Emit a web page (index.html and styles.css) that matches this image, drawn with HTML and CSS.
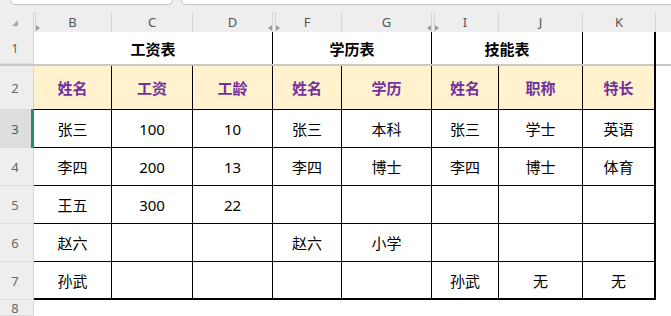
FILE: index.html
```html
<!DOCTYPE html>
<html lang="zh">
<head>
<meta charset="utf-8">
<title>Sheet</title>
<link rel="stylesheet" href="styles.css">
</head>
<body>
<div class="topbar"><div class="tab tab1"></div><div class="tab tab2"></div></div>
<div class="grid colhdr">
  <div class="ch corner"><span class="corner-tri"></span></div>
  <div class="ch hid hid1">B<span class="arr arr-r a1"></span></div>
  <div class="ch">C</div>
  <div class="ch">D<span class="arr arr-l"></span></div>
  <div class="ch hid hid2">F<span class="arr arr-r a2"></span></div>
  <div class="ch">G<span class="arr arr-l"></span></div>
  <div class="ch hid hid2">I<span class="arr arr-r a2"></span></div>
  <div class="ch">J</div>
  <div class="ch">K</div>
  <div class="ch noline"></div>
</div>
<div class="grid sheet">
  <div class="rh">1</div>
  <div class="c t span3">工资表</div>
  <div class="c t span2">学历表</div>
  <div class="c t span2">技能表</div>
  <div class="c t k"></div>
  <div class="e"></div>

  <div class="frozen"></div>
  <div class="frozen-l"></div>

  <div class="rh">2</div>
  <div class="c h">姓名</div>
  <div class="c h">工资</div>
  <div class="c h">工龄</div>
  <div class="c h">姓名</div>
  <div class="c h">学历</div>
  <div class="c h">姓名</div>
  <div class="c h">职称</div>
  <div class="c h k">特长</div>
  <div class="e"></div>

  <div class="rh sel">3</div>
  <div class="c">张三</div>
  <div class="c">100</div>
  <div class="c">10</div>
  <div class="c">张三</div>
  <div class="c">本科</div>
  <div class="c">张三</div>
  <div class="c">学士</div>
  <div class="c k">英语</div>
  <div class="e"></div>

  <div class="rh">4</div>
  <div class="c">李四</div>
  <div class="c">200</div>
  <div class="c">13</div>
  <div class="c">李四</div>
  <div class="c">博士</div>
  <div class="c">李四</div>
  <div class="c">博士</div>
  <div class="c k">体育</div>
  <div class="e"></div>

  <div class="rh">5</div>
  <div class="c">王五</div>
  <div class="c">300</div>
  <div class="c">22</div>
  <div class="c"></div>
  <div class="c"></div>
  <div class="c"></div>
  <div class="c"></div>
  <div class="c k"></div>
  <div class="e"></div>

  <div class="rh">6</div>
  <div class="c">赵六</div>
  <div class="c"></div>
  <div class="c"></div>
  <div class="c">赵六</div>
  <div class="c">小学</div>
  <div class="c"></div>
  <div class="c"></div>
  <div class="c k"></div>
  <div class="e"></div>

  <div class="rh">7</div>
  <div class="c last">孙武</div>
  <div class="c last"></div>
  <div class="c last"></div>
  <div class="c last"></div>
  <div class="c last"></div>
  <div class="c last">孙武</div>
  <div class="c last">无</div>
  <div class="c last k">无</div>
  <div class="e"></div>

  <div class="rh">8</div>
</div>
</body>
</html>
```
FILE: styles.css
```css
* { box-sizing: border-box; }
html, body { margin: 0; padding: 0; }
body {
  width: 671px;
  height: 316px;
  overflow: hidden;
  background: #ffffff;
  font-family: "Noto Sans", "Noto Sans CJK SC", sans-serif;
}
.topbar {
  height: 5px;
  background: #eeeeee;
  display: flex;
  gap: 8px;
  padding-left: 10px;
}
.tab {
  height: 5px;
  background: #ffffff;
  border: 1px solid #c3c3c3;
  border-top: none;
}
.tab1 { width: 163px; border-radius: 0 0 5px 5px; }
.tab2 { flex: 1; border-right: none; border-radius: 0 0 0 5px; }

.grid {
  display: grid;
  grid-template-columns: 34px 78px 81px 80px 69px 90px 67px 84px 73px 1fr;
}
.colhdr {
  height: 27px;
  padding-top: 7px;
  background: #eeeeee;
}
.ch {
  position: relative;
  border-right: 1px solid #d6d6d6;
  font-size: 13px;
  line-height: 20px;
  color: #555555;
  text-align: center;
}
.ch.noline { border-right: none; }
.corner {
  display: flex;
  padding-left: 12px;
  padding-top: 8px;
}
.corner-tri {
  width: 0;
  height: 0;
  border-left: 6px solid transparent;
  border-bottom: 6px solid #a9a9a9;
}
.hid::before {
  content: "";
  position: absolute;
  top: 0;
  bottom: 0;
  width: 1px;
  background: #d6d6d6;
}
.hid1::before { left: 1px; }
.hid2::before { left: 2px; }
.arr {
  position: absolute;
  top: 13px;
  width: 0;
  height: 0;
  border-top: 3px solid transparent;
  border-bottom: 3px solid transparent;
}
.arr-r { border-left: 4px solid #9c9c9c; }
.arr-l { right: 0; border-right: 4px solid #9c9c9c; }
.a1 { left: 2px; }
.a2 { left: 3px; }

.sheet {
  grid-template-rows: 32px 2px 44px repeat(5, 38px) 16px;
}
.rh {
  position: relative;
  grid-column: 1;
  background: #eeeeee;
  border-right: 1px solid #d6d6d6;
  border-bottom: 1px solid #dcdcdc;
  font-size: 13px;
  color: #666666;
  display: flex;
  align-items: center;
  justify-content: center;
  padding-right: 3px;
}
.rh.sel {
  background: #dedede;
  color: #2b6e55;
}
.rh.sel::after {
  content: "";
  position: absolute;
  right: -1px;
  top: -1px;
  bottom: -1px;
  width: 3px;
  background: #1f9160;
}
.c {
  border-right: 1px solid #000000;
  border-bottom: 1px solid #000000;
  display: flex;
  align-items: center;
  justify-content: center;
  font-size: 15px;
  color: #000000;
}
.c.t { border-bottom: none; font-weight: bold; }
.span3 { grid-column: span 3; }
.span2 { grid-column: span 2; }
.c.h {
  background: #fff2cc;
  color: #7030a0;
  font-weight: bold;
}
.c.k { border-right-width: 2px; }
.c.last { border-bottom-width: 2px; }
.frozen {
  grid-column: 1 / 10;
  background: #c8c8c8;
  border-right: 2px solid #000000;
}
.frozen-l { background: #c8c8c8; }
```
